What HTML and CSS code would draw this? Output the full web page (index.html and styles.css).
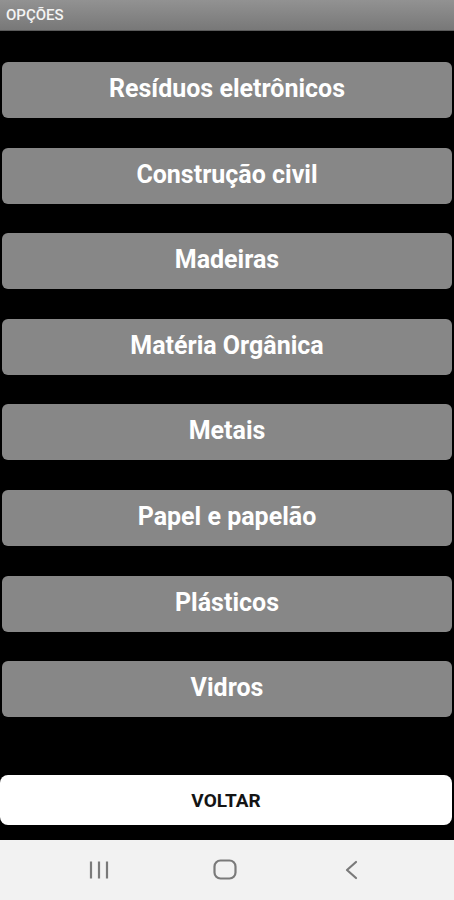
FILE: index.html
```html
<!DOCTYPE html>
<html lang="pt-BR">
<head>
    <meta charset="UTF-8">
    <meta name="viewport" content="width=device-width, initial-scale=1.0">
    <title>Opções</title>
    <link rel="stylesheet" href="styles.css">
</head>
<body>
    <div class="screen">
        <header class="top-bar">OPÇÕES</header>
        <main class="options">
            <div class="option-list">
                <button class="option-btn">Resíduos eletrônicos</button>
                <button class="option-btn">Construção civil</button>
                <button class="option-btn">Madeiras</button>
                <button class="option-btn">Matéria Orgânica</button>
                <button class="option-btn">Metais</button>
                <button class="option-btn">Papel e papelão</button>
                <button class="option-btn">Plásticos</button>
                <button class="option-btn">Vidros</button>
            </div>
            <button class="back-btn">VOLTAR</button>
        </main>
        <nav class="nav-bar">
            <svg class="nav-icon" width="24" height="24" viewBox="0 0 24 24">
                <path d="M4 3.5v17M12 3.5v17M20 3.5v17" stroke="#7a7a7a" stroke-width="2.2" fill="none"/>
            </svg>
            <svg class="nav-icon" width="24" height="24" viewBox="0 0 24 24">
                <rect x="1.5" y="2.5" width="21" height="18" rx="6" stroke="#7a7a7a" stroke-width="2.2" fill="none"/>
            </svg>
            <svg class="nav-icon" width="24" height="24" viewBox="0 0 24 24">
                <path d="M17 4L8 12l9 8" stroke="#7a7a7a" stroke-width="2.2" fill="none" stroke-linecap="round" stroke-linejoin="round"/>
            </svg>
        </nav>
    </div>
</body>
</html>
```

FILE: styles.css
```css
body {
    margin: 0;
    background: #000;
    font-family: Roboto, "Liberation Sans", sans-serif;
}
.screen {
    min-height: 100vh;
    display: flex;
    flex-direction: column;
}
.top-bar {
    height: 30px;
    padding-left: 6px;
    display: flex;
    align-items: center;
    background: linear-gradient(#929292, #787878);
    border-bottom: 1px solid #5a5a5a;
    color: #f4f4f4;
    font-size: 15px;
    font-weight: 500;
}
.options {
    flex: 1;
    display: flex;
    flex-direction: column;
    justify-content: space-between;
    padding: 31px 2px 15px 0;
}
.option-list {
    display: flex;
    flex-direction: column;
    gap: 29.6px;
    padding-left: 2px;
}
.option-btn {
    height: 56px;
    padding: 0 0 3px;
    border: none;
    border-radius: 6px;
    background: #878787;
    color: #fff;
    font-family: inherit;
    font-size: 25px;
    font-weight: 700;
    cursor: pointer;
}
.back-btn {
    height: 50px;
    border: none;
    border-radius: 8px;
    background: #fff;
    color: #141414;
    font-family: inherit;
    font-size: 19px;
    font-weight: 700;
    cursor: pointer;
}
.nav-bar {
    height: 60px;
    background: #f2f2f2;
    display: flex;
    align-items: center;
    gap: 102px;
    padding-left: 87px;
}
.nav-icon { display: block; }
```
